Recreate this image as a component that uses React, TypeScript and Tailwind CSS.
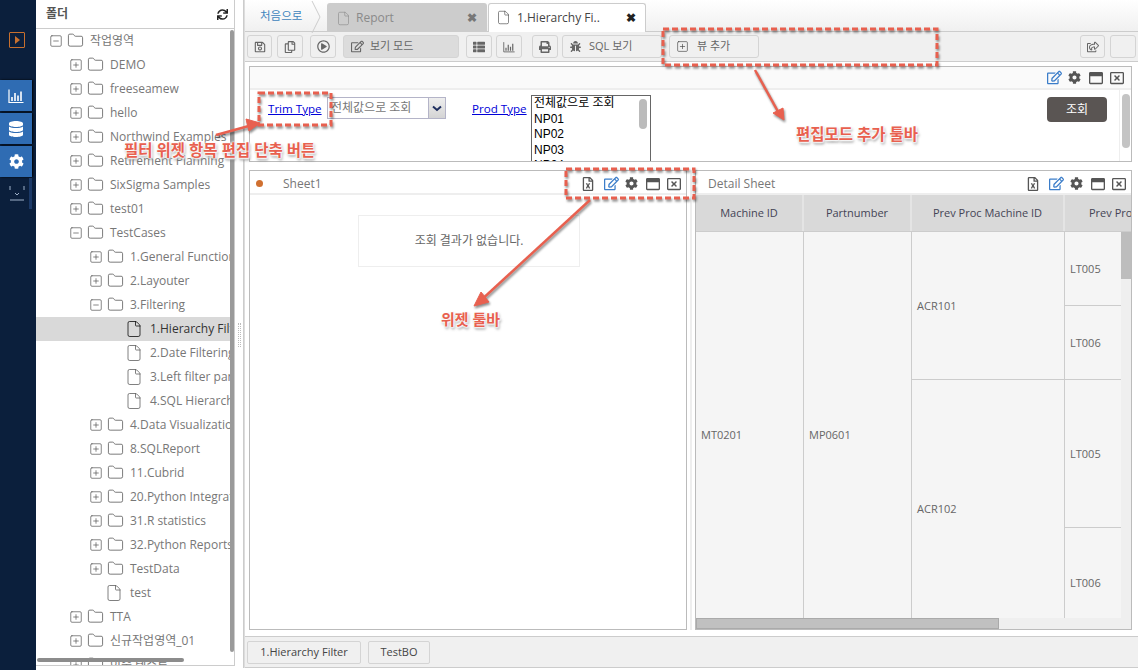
import { File, Folder, SquareMinus, SquarePlus } from "lucide-react"
import type { ReactNode } from "react"
import {
  FaBug,
  FaCog,
  FaDatabase,
  FaPrint,
  FaRegCopy,
  FaRegEdit,
  FaRegFileExcel,
  FaRegPlayCircle,
  FaRegSave,
  FaRegShareSquare,
  FaRegWindowClose,
  FaRegWindowMaximize,
  FaSync,
  FaThList,
} from "react-icons/fa"

const font = "font-['Open_Sans','Noto_Sans_CJK_KR',sans-serif]"
const glow =
  "[text-shadow:0_0_2px_#fff,0_0_2px_#fff,0_0_3px_#fff,1px_1px_2px_#fff,1px_2px_3px_#666]"

type Node = { label: string; level: number; kind: "plus" | "minus" | "file"; selected?: boolean }

const tree: Node[] = [
  { label: "작업영역", level: 0, kind: "minus" },
  { label: "DEMO", level: 1, kind: "plus" },
  { label: "freeseamew", level: 1, kind: "plus" },
  { label: "hello", level: 1, kind: "plus" },
  { label: "Northwind Examples", level: 1, kind: "plus" },
  { label: "Retirement Planning", level: 1, kind: "plus" },
  { label: "SixSigma Samples", level: 1, kind: "plus" },
  { label: "test01", level: 1, kind: "plus" },
  { label: "TestCases", level: 1, kind: "minus" },
  { label: "1.General Functions", level: 2, kind: "plus" },
  { label: "2.Layouter", level: 2, kind: "plus" },
  { label: "3.Filtering", level: 2, kind: "minus" },
  { label: "1.Hierarchy Filter", level: 3, kind: "file", selected: true },
  { label: "2.Date Filtering", level: 3, kind: "file" },
  { label: "3.Left filter panel", level: 3, kind: "file" },
  { label: "4.SQL Hierarchy", level: 3, kind: "file" },
  { label: "4.Data Visualization", level: 2, kind: "plus" },
  { label: "8.SQLReport", level: 2, kind: "plus" },
  { label: "11.Cubrid", level: 2, kind: "plus" },
  { label: "20.Python Integration", level: 2, kind: "plus" },
  { label: "31.R statistics", level: 2, kind: "plus" },
  { label: "32.Python Reports", level: 2, kind: "plus" },
  { label: "TestData", level: 2, kind: "plus" },
  { label: "test", level: 3, kind: "file" },
  { label: "TTA", level: 1, kind: "plus" },
  { label: "신규작업영역_01", level: 1, kind: "plus" },
  { label: "이중 테스트", level: 1, kind: "plus" },
]

function BarsIcon({ size }: { size: number }) {
  return (
    <svg width={size} height={size} viewBox="0 0 16 16" fill="none" stroke="currentColor" strokeWidth="1.2">
      <path d="M1 1.5V14.5H15.5" />
      <path d="M4 13V9M7 13V5M10 13V7.5M13 13V3.5" strokeWidth="1.6" />
    </svg>
  )
}

function TreeRow({ node }: { node: Node }) {
  const fileLeft = node.label === "test" ? 69 : 89
  return (
    <div
      className={`flex h-6 shrink-0 items-center whitespace-nowrap pb-px text-[12px] text-[#777] ${node.selected ? "bg-[#d9d9d9]" : ""}`}
      style={{ paddingLeft: node.kind === "file" ? fileLeft : 13 + node.level * 20 }}
    >
      {node.kind === "plus" && <SquarePlus size={14} strokeWidth={1.2} className="mr-[4px] shrink-0 text-[#555]" />}
      {node.kind === "minus" && <SquareMinus size={14} strokeWidth={1.2} className="mr-[4px] shrink-0 text-[#555]" />}
      {node.kind === "file" ? (
        <File size={18} strokeWidth={1} className={`mr-[7px] shrink-0 ${node.selected ? "text-black" : "text-[#555]"}`} />
      ) : (
        <Folder size={17} strokeWidth={1} className="mr-[6px] shrink-0 text-[#444]" />
      )}
      <span className={node.selected ? "text-[#333]" : ""}>{node.label}</span>
    </div>
  )
}

function Rail() {
  return (
    <div className="flex w-[36px] shrink-0 flex-col bg-[#0b1f3c]">
      <div className="ml-[9px] mt-[32px] flex h-[16px] w-[16px] items-center justify-center rounded-[1px] border border-[#c8702e]">
        <div className="h-0 w-0 border-y-[4px] border-l-[5px] border-y-transparent border-l-[#c8702e]" />
      </div>
      <div className="mt-[32px] flex flex-col gap-[2px]">
        <div className="flex h-[31px] w-[32px] items-center justify-center bg-[#2f6cb3] text-white shadow-[1px_0_2px_#000]">
          <BarsIcon size={16} />
        </div>
        <div className="flex h-[31px] w-[32px] items-center justify-center bg-[#2f6cb3] text-white shadow-[1px_0_2px_#000]">
          <FaDatabase size={16} />
        </div>
        <div className="flex h-[31px] w-[32px] items-center justify-center bg-[#2f6cb3] text-white shadow-[1px_0_2px_#000]">
          <FaCog size={15} />
        </div>
      </div>
      <div className="mt-[1px] flex">
        <svg width="29" height="32" viewBox="0 0 29 32" className="text-[#9fb2c9]">
          <path d="M10 8v4M24 8v4M10 22h14M15 15l2 2 2-2" fill="none" stroke="currentColor" strokeWidth="1" />
        </svg>
        <div className="h-[31px] w-[3px] bg-[#1c3a68]" />
      </div>
    </div>
  )
}

function Sidebar() {
  return (
    <div className="relative flex h-[666px] w-[199px] shrink-0 flex-col overflow-hidden border-r border-b border-[#ccc] bg-white">
      <div className="flex h-[29px] shrink-0 items-center justify-between border-b border-[#ccc] pl-[10px] pr-[6px]">
        <span className="text-[12px] font-semibold text-[#555]">폴더</span>
        <FaSync size={11} className="text-[#222]" />
      </div>
      {tree.map((node) => (
        <TreeRow key={node.label + node.level} node={node} />
      ))}
      <div className="absolute right-0 top-[30px] h-[622px] w-[4px] rounded-full bg-[#9a9a9a]" />
      <div className="absolute bottom-[3px] left-[1px] h-[4px] w-[147px] rounded-full bg-[#8c8c8c]" />
    </div>
  )
}

function ToolButton({ className, children }: { className: string; children: ReactNode }) {
  return (
    <div className={`flex h-[23px] items-center rounded-[3px] border border-[#d4d4d4] text-[#666] ${className}`}>
      {children}
    </div>
  )
}

function Toolbar() {
  return (
    <div className="flex h-[30px] shrink-0 items-center border-b border-[#ccc] bg-[#f0f0f0] pl-[2px] text-[11px]">
      <ToolButton className="w-[25px] justify-center"><FaRegSave size={12} /></ToolButton>
      <ToolButton className="ml-[5px] w-[26px] justify-center"><FaRegCopy size={12} /></ToolButton>
      <ToolButton className="ml-[7px] w-[26px] justify-center"><FaRegPlayCircle size={13} /></ToolButton>
      <ToolButton className="ml-[7px] w-[116px] bg-[#dcdcdc] pl-[7px]">
        <FaRegEdit size={13} />
        <span className="ml-[6px]">보기 모드</span>
      </ToolButton>
      <ToolButton className="ml-[7px] w-[26px] justify-center"><FaThList size={12} /></ToolButton>
      <ToolButton className="ml-[4px] w-[26px] justify-center"><BarsIcon size={12} /></ToolButton>
      <ToolButton className="ml-[10px] w-[26px] justify-center"><FaPrint size={12} /></ToolButton>
      <ToolButton className="ml-[4px] w-[100px] pl-[7px]">
        <FaBug size={11} />
        <span className="ml-[8px]">SQL 보기</span>
      </ToolButton>
      <ToolButton className="ml-[7px] w-[90px] pl-[6px]">
        <SquarePlus size={13} strokeWidth={1.2} className="text-[#444]" />
        <span className="ml-[8px]">뷰 추가</span>
      </ToolButton>
      <ToolButton className="ml-[321px] w-[25px] justify-center"><FaRegShareSquare size={12} /></ToolButton>
      <ToolButton className="ml-[5px] w-[26px]"><span /></ToolButton>
    </div>
  )
}

function Tabs() {
  return (
    <div className="flex h-[32px] shrink-0 items-end border-b border-[#ccc] bg-gradient-to-b from-white to-[#f0f0f0] text-[12px]">
      <div className="relative flex h-[28px] w-[82px] items-center pb-[3px] pl-[15px] text-[11.5px] text-[#3f85bd]">
        처음으로
        <svg width="10" height="32" viewBox="0 0 10 32" className="absolute right-[6px] top-[-2px] text-[#ccc]">
          <path d="M1 0l8 16-8 16" fill="none" stroke="currentColor" />
        </svg>
      </div>
      <div className="flex h-[28px] w-[160px] items-center rounded-t-[3px] bg-[#ccc] pl-[9px] pr-[10px] pt-[2px] text-[#8a8a8a]">
        <File size={15} strokeWidth={1} />
        <span className="ml-[5px]">Report</span>
        <span className="ml-auto text-[12px] font-bold text-[#777]">✖</span>
      </div>
      <div className="-mb-px ml-px flex h-[29px] w-[158px] items-center rounded-t-[3px] border border-b-0 border-[#ccc] bg-white pb-[1px] pl-[7px] pr-[9px] text-[#444]">
        <File size={15} strokeWidth={1} />
        <span className="ml-[6px]">1.Hierarchy Fi..</span>
        <span className="ml-auto text-[12px] font-bold text-[#222]">✖</span>
      </div>
    </div>
  )
}

function WidgetIcons({ excel }: { excel: boolean }) {
  return (
    <div className="flex items-center text-[#555]">
      {excel && <FaRegFileExcel size={14} className="mr-[9px]" />}
      <FaRegEdit size={15} className="mr-[6px] text-[#3b7dc9]" />
      <FaCog size={13} className="mr-[8px]" />
      <FaRegWindowMaximize size={14} className="mr-[7px]" />
      <FaRegWindowClose size={14} />
    </div>
  )
}

function FilterPanel() {
  return (
    <div className="ml-[4px] mt-[4px] flex h-[96px] w-[883px] shrink-0 flex-col overflow-hidden border border-[#bbb] bg-white">
      <div className="flex h-[23px] shrink-0 items-center justify-end border-b-2 border-[#eee] bg-[#fafafa] pr-[7px]">
        <WidgetIcons excel={false} />
      </div>
      <div className="relative flex flex-1 overflow-hidden">
        <a className="ml-[18px] mt-[10px] w-[54px] shrink-0 whitespace-nowrap text-[11.6px] leading-[17px] text-[#0000d8] underline">Trim Type</a>
        <div className="ml-[5px] mt-[7px] flex h-[22px] w-[119px] shrink-0 items-center border border-[#b4b4c8] text-[12px] text-[#777]">
          <span className="flex-1 pl-[3px]">전체값으로 조회</span>
          <div className="flex h-full w-[17px] items-center justify-center border-l border-[#b4b4c8] bg-gradient-to-b from-[#eee] to-[#d4d4d4]">
            <svg width="10" height="7" viewBox="0 0 10 7" className="text-[#1f2f5f]">
              <path d="M1 1.5L5 5L9 1.5" fill="none" stroke="currentColor" strokeWidth="2" />
            </svg>
          </div>
        </div>
        <a className="ml-[26px] mt-[10px] w-[54px] shrink-0 whitespace-nowrap text-[11.6px] leading-[17px] text-[#0000d8] underline">Prod Type</a>
        <div className="relative ml-[5px] mt-[5px] h-[70px] w-[120px] shrink-0 overflow-hidden border border-[#666] pl-[2px] font-['Liberation_Sans','Noto_Sans_CJK_KR',sans-serif] text-[12px] leading-[15.5px] text-black">
          <div>전체값으로 조회</div>
          <div>NP01</div>
          <div>NP02</div>
          <div>NP03</div>
          <div>NP04</div>
          <div className="absolute right-[3px] top-[3px] h-[30px] w-[8px] rounded-full bg-[#bbb]" />
        </div>
        <div className="ml-[396px] mt-[7px] flex h-[25px] w-[60px] shrink-0 items-center justify-center rounded-[4px] bg-[#5a5553] text-[12px] text-white">
          조회
        </div>
        <div className="ml-[12px] flex w-[13px] justify-center border-l border-[#eee] pt-[4px]">
          <div className="h-[54px] w-[8px] rounded-full bg-[#c4c4c4]" />
        </div>
      </div>
    </div>
  )
}

function SheetPanel() {
  return (
    <div className="flex h-[460px] w-[438px] shrink-0 flex-col border border-[#bbb] bg-white">
      <div className="flex h-[24px] shrink-0 items-center border-b-2 border-[#eee] pl-[6px] pr-[5px] pt-[3px]">
        <span className="h-[7px] w-[7px] rounded-full bg-[#d07030]" />
        <span className="ml-[20px] text-[12px] text-[#777]">Sheet1</span>
        <div className="ml-auto">
          <WidgetIcons excel />
        </div>
      </div>
      <div className="ml-[108px] mt-[20px] flex h-[52px] w-[222px] items-center justify-center border border-[#eee] text-[12px] text-[#666]">
        조회 결과가 없습니다.
      </div>
    </div>
  )
}

const cellText = "flex shrink-0 items-center pl-[5px] pt-px text-[11px] text-[#666]"

function DetailPanel() {
  return (
    <div className="flex h-[460px] w-[437px] shrink-0 flex-col overflow-hidden border border-[#bbb] bg-white">
      <div className="flex h-[24px] shrink-0 items-center justify-between border-b-2 border-[#eee] pl-[12px] pr-[5px] pt-[3px]">
        <span className="text-[12px] text-[#777]">Detail Sheet</span>
        <WidgetIcons excel />
      </div>
      <div className="flex h-[37px] shrink-0 border-b border-[#ccc] bg-[#d9d9d9] text-center text-[11px] leading-[36px] text-[#445]">
        <div className="w-[108px] shrink-0 border-r-2 border-[#e4e4e4]">Machine ID</div>
        <div className="w-[108px] shrink-0 border-r-2 border-[#e4e4e4]">Partnumber</div>
        <div className="w-[153px] shrink-0 border-r-2 border-[#e4e4e4]">Prev Proc Machine ID</div>
        <div className="flex-1 overflow-hidden whitespace-nowrap pl-[24px] text-left">Prev Proc Machine</div>
      </div>
      <div className="relative flex h-[386px] shrink-0 overflow-hidden bg-[#f5f5f5]">
        <div className={`${cellText} h-[406px] w-[108px] border-r border-[#ccc]`}>MT0201</div>
        <div className={`${cellText} h-[406px] w-[108px] border-r border-[#ccc]`}>MP0601</div>
        <div className="flex w-[153px] shrink-0 flex-col">
          <div className={`${cellText} h-[148px] border-r border-b border-[#ccc]`}>ACR101</div>
          <div className={`${cellText} h-[258px] border-r border-[#ccc]`}>ACR102</div>
        </div>
        <div className="flex flex-1 flex-col">
          <div className={`${cellText} h-[74px] border-b border-[#ccc]`}>LT005</div>
          <div className={`${cellText} h-[74px] border-b border-[#ccc]`}>LT006</div>
          <div className={`${cellText} h-[148px] border-b border-[#ccc]`}>LT005</div>
          <div className={`${cellText} h-[110px]`}>LT006</div>
        </div>
        <div className="w-[10px] shrink-0 bg-[#efefef]">
          <div className="h-[47px] w-full bg-[#bdbdbd]" />
        </div>
      </div>
      <div className="flex h-[11px] shrink-0 bg-[#efefef]">
        <div className="h-full w-[303px] border border-[#aaa] bg-[#c0c0c0]" />
      </div>
    </div>
  )
}

function BottomBar() {
  return (
    <div className="mt-[6px] flex h-[32px] shrink-0 items-center gap-[7px] border-y border-[#ccc] bg-[#f0f0f0] pl-[2px] text-[11px] text-[#444]">
      <div className="flex h-[23px] w-[114px] items-center justify-center rounded-[2px] border border-[#d4d4d4]">1.Hierarchy Filter</div>
      <div className="flex h-[23px] w-[62px] items-center justify-center rounded-[2px] border border-[#d4d4d4]">TestBO</div>
    </div>
  )
}

function Annotations() {
  const red = "#e8604f"
  return (
    <>
      <svg width="1142" height="670" viewBox="0 0 1142 670" className="pointer-events-none absolute left-0 top-0">
        <g stroke={red} fill="none" style={{ filter: "drop-shadow(1px 2px 1px rgba(0,0,0,.45))" }}>
          <rect x="259" y="93" width="72" height="32" strokeWidth="3" strokeDasharray="6 3" />
          <rect x="663" y="29" width="274" height="36" strokeWidth="3" strokeDasharray="6 3" />
          <rect x="566" y="169" width="128" height="29" strokeWidth="3" strokeDasharray="6 3" />
          <path d="M216 135L256 124" strokeWidth="2.5" />
          <path d="M755 70L781 117" strokeWidth="2.5" />
          <path d="M590 200L478 303" strokeWidth="2.5" />
          <path d="M260 123L246 119L249 131Z" fill={red} strokeWidth="1" />
          <path d="M784 120L773 113L783 108Z" fill={red} strokeWidth="1" />
          <path d="M474 306L481 292L489 302Z" fill={red} strokeWidth="1" />
        </g>
      </svg>
      <div className={`absolute left-[124px] top-[140px] whitespace-nowrap text-[15.5px] font-bold leading-5 text-[#e8604f] ${glow}`}>필터 위젯 항목 편집 단축 버튼</div>
      <div className={`absolute left-[796px] top-[124px] whitespace-nowrap text-[15.5px] font-bold leading-5 text-[#e8604f] ${glow}`}>편집모드 추가 툴바</div>
      <div className={`absolute left-[441px] top-[309px] whitespace-nowrap text-[15px] font-bold leading-5 text-[#e8604f] ${glow}`}>위젯 툴바</div>
    </>
  )
}

export default function App() {
  return (
    <div className={`relative flex h-[670px] w-[1142px] overflow-hidden bg-white ${font}`}>
      <Rail />
      <Sidebar />
      <div className="flex w-[8px] shrink-0 items-center justify-center">
        <div className="h-[24px] w-[3px] border-x border-dotted border-[#bbb]" />
      </div>
      <div className="flex h-[668px] w-[895px] shrink-0 flex-col border-l border-[#ccc]">
        <div className="flex min-h-0 flex-1 flex-col border-l border-[#ddd]">
          <Tabs />
          <Toolbar />
          <FilterPanel />
          <div className="ml-[4px] mt-[8px] flex shrink-0">
            <SheetPanel />
            <div className="mx-[3px] w-[2px] bg-[#eee]" />
            <DetailPanel />
          </div>
          <BottomBar />
        </div>
      </div>
      <Annotations />
    </div>
  )
}
